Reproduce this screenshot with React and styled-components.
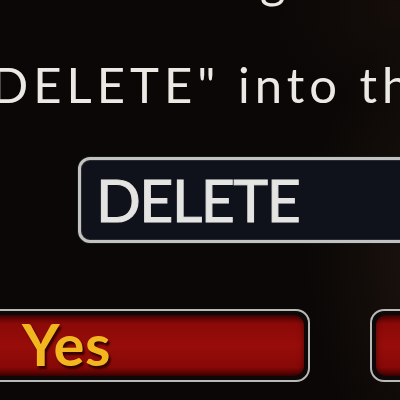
import React from "react";
import styled, { createGlobalStyle } from "styled-components";

const Global = createGlobalStyle`
  html, body { margin: 0; padding: 0; background: #0a0706; }
  body { font-family: Lato, "Open Sans", sans-serif; }
`;

const Screen = styled.div`
  width: 400px;
  height: 400px;
  overflow: hidden;
  background:
    radial-gradient(ellipse 180px 300px at 440px 250px, rgba(70, 46, 30, 0.34), transparent 75%),
    radial-gradient(ellipse 180px 140px at 400px 10px, rgba(48, 30, 20, 0.28), transparent 70%),
    #0a0706;
`;

const Dialog = styled.div`
  display: flex;
  flex-direction: column;
  align-items: flex-start;
  margin-top: -51px;
`;

const Message = styled.p`
  margin: 0 0 0 ${(p) => p.$indent}px;
  white-space: nowrap;
  font-size: 49px;
  line-height: 60px;
  letter-spacing: 5px;
  color: #ebe9e3;
  font-weight: 400;
  & + & { margin-top: 45px; }
`;

const Field = styled.input`
  box-sizing: border-box;
  margin: 43px 0 0 78px;
  width: 420px;
  height: 86px;
  flex: none;
  padding: 0 0 2px 15px;
  border: 3px solid #c2c3c1;
  border-radius: 12px;
  background: #10121b;
  box-shadow: inset 0 0 0 1px #2a2c33, 0 0 0 1px #1a1816;
  color: #e4e4e2;
  font-family: Lato, "Open Sans", sans-serif;
  font-size: 59px;
  font-weight: 400;
  -webkit-text-stroke: 1px #e4e4e2;
  letter-spacing: -1.5px;
  outline: none;
`;

const Actions = styled.div`
  display: flex;
  gap: 60px;
  margin: 66px 0 0 -20px;
`;

const Button = styled.button`
  box-sizing: border-box;
  flex: none;
  width: ${(p) => p.$width}px;
  height: 73px;
  padding: 4px;
  border: 2px solid #b8bab8;
  border-radius: 14px;
  background: #0e0808;
  cursor: pointer;
`;

const Face = styled.span`
  display: flex;
  align-items: center;
  height: 100%;
  box-sizing: border-box;
  padding: 0 0 4px 36px;
  border-radius: 10px;
  background: linear-gradient(180deg, #4e0202 0%, #8a0a08 14%, #980d0a 50%, #860907 86%, #480202 100%);
  box-shadow: inset 0 0 6px rgba(0, 0, 0, 0.5);
  color: #f2b61f;
  font-family: Lato, "Open Sans", sans-serif;
  font-size: 58px;
  font-weight: 700;
  letter-spacing: 0.5px;
  text-shadow: 2px 3px 2px rgba(40, 0, 0, 0.85);
`;

export default function App() {
  return (
    <>
      <Global />
      <Screen>
        <Dialog>
          <Message $indent={-647}>You are about to delete this message.</Message>
          <Message $indent={-173}>Type "DELETE" into the field to confirm.</Message>
          <Field readOnly value="DELETE" />
          <Actions>
            <Button $width={330}>
              <Face>Yes</Face>
            </Button>
            <Button $width={330}>
              <Face>No</Face>
            </Button>
          </Actions>
        </Dialog>
      </Screen>
    </>
  );
}
